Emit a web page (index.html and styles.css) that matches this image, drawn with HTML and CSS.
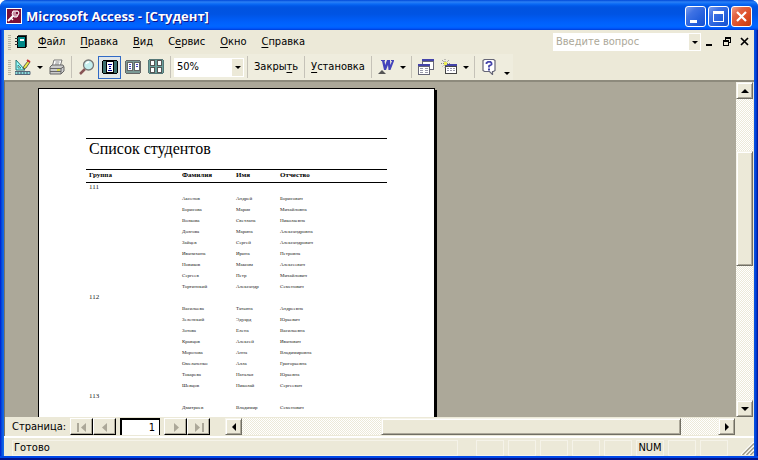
FILE: index.html
```html
<!DOCTYPE html>
<html lang="ru">
<head>
<meta charset="utf-8">
<title>Microsoft Access - [Студент]</title>
<link rel="stylesheet" href="styles.css">
</head>
<body>
<div class="window">
  <header class="titlebar">
    <svg class="app-icon" width="16" height="16" viewBox="0 0 16 16" shape-rendering="crispEdges">
      <path fill="#fff" d="M0 0h16v16H0z"/><path fill="#7b1038" d="M1 1h14v14H1z"/>
      <g shape-rendering="auto" fill="none" stroke="#fff" stroke-width="2"><path d="M8 7 2 13"/><path d="M7 3h5l1 2-2 4H8L6 6z" fill="#c890a4" stroke-width="1"/><path d="M5 10l2 2" stroke-width="1.4"/></g>
      <path fill="#7b1038" d="M10 4h2v2h-2z"/>
    </svg>
    <h1 class="title">Microsoft Access - [Студент]</h1>
    <div class="caption-buttons">
      <button class="caption" aria-label="Свернуть"><svg width="19" height="19"><path fill="#fff" d="M4 13h7v3H4z"/></svg></button>
      <button class="caption" aria-label="Развернуть"><svg width="19" height="19" shape-rendering="crispEdges"><path fill="#fff" fill-rule="evenodd" d="M4 4h11v11H4zM5 7v7h9V7z"/></svg></button>
      <button class="caption caption-close" aria-label="Закрыть окно"><svg width="19" height="19"><path d="M5 5l9 9M14 5l-9 9" stroke="#fff" stroke-width="2.2"/></svg></button>
    </div>
  </header>

  <nav class="menubar">
    <span class="grip"></span>
    <svg class="doc-icon" width="12" height="14" viewBox="0 0 12 14" shape-rendering="crispEdges">
      <path d="M2 1h9v12H2z"/><path fill="#088" d="M3 2h7v10H3z"/><path fill="#fff" d="M5 4h4v2H5z"/><path fill="#333" d="M0 3h3v1H0zM0 6h3v1H0zM0 9h3v1H0zM3 0h9v1H3zM11 1h1v11h-1z"/>
    </svg>
    <div class="menu-items">
      <button class="menu"><u>Ф</u>айл</button>
      <button class="menu"><u>П</u>равка</button>
      <button class="menu"><u>В</u>ид</button>
      <button class="menu">С<u>е</u>рвис</button>
      <button class="menu"><u>О</u>кно</button>
      <button class="menu"><u>С</u>правка</button>
    </div>
    <div class="combo ask">
      <input type="text" aria-label="Вопрос" placeholder="Введите вопрос">
      <button class="drop" aria-label="Список вопросов"><i class="arrow"></i></button>
    </div>
    <div class="mdi">
      <button aria-label="Свернуть документ"><svg width="10" height="10" shape-rendering="crispEdges"><path d="M2 7h6v2H2z"/></svg></button>
      <button aria-label="Восстановить документ"><svg width="10" height="10" shape-rendering="crispEdges"><path fill-rule="evenodd" d="M3 0h6v6H7v3H1V3h2zM4 2v1h3v2h1V2zM2 5v3h4V5z"/></svg></button>
      <button aria-label="Закрыть документ"><svg width="10" height="10"><path d="M1 1l7 7M8 1l-7 7" stroke="#000" stroke-width="1.7"/></svg></button>
    </div>
  </nav>

  <div class="toolbar">
    <span class="grip"></span>
    <button class="tool split" aria-label="Вид">
      <svg width="16" height="16" viewBox="0 0 16 16"><path d="M1 1v10h9z" fill="#9ff" stroke="#277" /><path d="M3 6v3h3z" fill="#efedde" stroke="#277" stroke-width=".8"/><path d="M0 12.500h15v3H0z" fill="#8dd" stroke="#567"/><path d="M3 13v2M6 13v2M9 13v2M12 13v2" stroke="#456"/><path d="M8 10l1-3 4-5 2 1-4 6z" fill="#ee4" stroke="#554" stroke-width=".9"/><path d="M12 1l3 2" stroke="#c33" stroke-width="2"/></svg>
      <i class="arrow"></i>
    </button>
    <button class="tool" aria-label="Печать">
      <svg width="16" height="16" viewBox="0 0 16 16"><path d="M5 1h8l-2 7H3z" fill="#fff" stroke="#777"/><path d="M6.500 3h4M6 5h4" stroke="#888"/><path d="M1 8l2-2h11l1 2v4l-3 3H1z" fill="#ccc" stroke="#666"/><path d="M1 9.500h11l3-2M1 12.500h11M12 9v6" fill="none" stroke="#666"/><path d="M8 11h3" stroke="#dd2" stroke-width="1.500"/></svg>
    </button>
    <span class="sep"></span>
    <button class="tool" aria-label="Масштаб">
      <svg width="16" height="16" viewBox="0 0 16 16"><path d="M6 10l-5 5" stroke="#855" stroke-width="2.500"/><circle cx="9.500" cy="6" r="5" fill="#c5eeee" stroke="#777" stroke-width="1.300"/><path d="M7 5q1-2 3-2" fill="none" stroke="#fff" stroke-width="1.300"/></svg>
    </button>
    <button class="tool pressed" aria-label="Одна страница" aria-pressed="true">
      <svg width="16" height="16" viewBox="0 0 16 16" shape-rendering="crispEdges"><path d="M1 1h14v1h1v12h-1v1H1v-1H0V2h1z"/><path fill="#3c6f6f" d="M1 2h14v12H1z"/><path d="M4 2h8v12H4z"/><path fill="#fff" d="M5 3h6v10H5z"/><path fill="#009" d="M6 5h4v1H6zM7 7h2v1H7zM7 9h2v1H7zM6 11h4v1H6z"/></svg>
    </button>
    <button class="tool" aria-label="Две страницы">
      <svg width="16" height="16" viewBox="0 0 16 16" shape-rendering="crispEdges"><path fill="#666" d="M1 1h14v1h1v12h-1v1H1v-1H0V2h1z"/><path fill="#7a9995" d="M1 2h14v12H1z"/><path fill="#666" d="M2 3h6v9H2zM9 3h6v9H9z"/><path fill="#fff" d="M3 4h4v7H3zM10 4h4v7h-4z"/><path fill="#44b" d="M4 5h2v1H4zM4 7h2v1H4zM4 9h2v1H4zM11 5h2v1h-2zM11 7h2v1h-2z"/></svg>
    </button>
    <button class="tool" aria-label="Несколько страниц">
      <svg width="16" height="16" viewBox="0 0 16 16" shape-rendering="crispEdges"><path fill="#577" d="M1 0h14v1h1v13h-1v1H1v-1H0V1h1z"/><path fill="#6a9f9b" d="M1 1h14v13H1z"/><path fill="#555" d="M2 1h5v6H2zM9 1h5v6H9zM2 8h5v6H2zM9 8h5v6H9z"/><path fill="#fff" d="M3 2h3v4H3zM10 2h3v4h-3zM3 9h3v4H3zM10 9h3v4h-3z"/></svg>
    </button>
    <span class="sep"></span>
    <div class="combo zoom">
      <input type="text" aria-label="Масштаб страницы" value="50%">
      <button class="drop" aria-label="Список масштабов"><i class="arrow"></i></button>
    </div>
    <span class="sep"></span>
    <button class="tool text">Закры<u>т</u>ь</button>
    <span class="sep"></span>
    <button class="tool text"><u>У</u>становка</button>
    <span class="sep"></span>
    <button class="tool split" aria-label="Связь с Office">
      <svg width="16" height="16" viewBox="0 0 16 16"><path fill="#44b" d="M3 1h4v1H6.500l.7 4L9 1h3l.3 5L14 2h-1V1h3v1l-3.500 9h-2L10 6l-2 5H6L4 2H3z"/><path fill="#555" d="M0 15l4-4 4 4z"/></svg>
      <i class="arrow"></i>
    </button>
    <span class="sep"></span>
    <button class="tool" aria-label="Окно базы данных">
      <svg width="16" height="16" viewBox="0 0 16 16" shape-rendering="crispEdges"><path fill="#667" d="M4 0h12v11H4z"/><path fill="#fff" d="M5 3h10v7H5z"/><path fill="#44a" d="M4 0h12v2H4z"/><path fill="#667" d="M0 5h12v11H0z"/><path fill="#fff" d="M1 8h10v7H1z"/><path fill="#44a" d="M0 5h12v2H0z"/><path fill="#99a" d="M2 9h3v1H2zM7 9h3v1H7zM2 11h3v1H2zM7 11h3v1H7zM2 13h3v1H2zM7 13h3v1H7z"/></svg>
    </button>
    <button class="tool split" aria-label="Новый объект">
      <svg width="16" height="16" viewBox="0 0 16 16" shape-rendering="crispEdges"><path fill="#444" d="M4 5h12v10H4z"/><path fill="#fff" d="M5 8h10v6H5z"/><path fill="#44a" d="M5 5h11v2H5z"/><path fill="#99a" d="M6 9h2v1H6zM9 9h2v1H9zM12 9h2v1h-2zM6 11h2v1H6zM9 11h2v1H9zM12 11h2v1h-2z"/><path shape-rendering="auto" stroke="#888" stroke-dasharray="1 1" d="M4 0v9M0 4.500h9M1 1l7 7M8 1L1 8"/><path fill="#ee5" d="M3 3h3v3H3z"/></svg>
      <i class="arrow"></i>
    </button>
    <span class="sep"></span>
    <button class="tool help" aria-label="Справка: Microsoft Access">
      <svg width="16" height="16" viewBox="0 0 16 16"><path fill="#fff" stroke="#667" stroke-width="1.200" d="M2.500.5h9l1.500 1v10l-1.500 1h-1v3l-3-3h-5l-1.500-1v-10z"/><path fill="none" stroke="#44a" stroke-width="1.800" d="M4.500 5V4L6 2.800h2.500L9.500 4v1.500L7 7v1.500"/><path fill="#44a" d="M6 9.500h2v2H6z"/></svg>
      <i class="arrow low"></i>
    </button>
  </div>

  <main class="workspace">
    <section class="preview">
      <article class="sheet">
        <h2 class="report-title">Список студентов</h2>
        <table class="report">
          <thead><tr><th class="c-group">Группа</th><th class="c-last">Фамилия</th><th class="c-first">Имя</th><th>Отчество</th></tr></thead>
          <tbody>
            <tr class="group"><td colspan="4">111</td></tr>
            <tr><td></td><td>Аксенов</td><td>Андрей</td><td>Борисович</td></tr>
            <tr><td></td><td>Борисова</td><td>Мария</td><td>Михайловна</td></tr>
            <tr><td></td><td>Волкова</td><td>Светлана</td><td>Николаевна</td></tr>
            <tr><td></td><td>Долгова</td><td>Марина</td><td>Александровна</td></tr>
            <tr><td></td><td>Зайцев</td><td>Сергей</td><td>Александрович</td></tr>
            <tr><td></td><td>Иванихина</td><td>Ирина</td><td>Петровна</td></tr>
            <tr><td></td><td>Новиков</td><td>Максим</td><td>Алексеевич</td></tr>
            <tr><td></td><td>Сергеев</td><td>Петр</td><td>Михайлович</td></tr>
            <tr><td></td><td>Тортинский</td><td>Александр</td><td>Семенович</td></tr>
          </tbody>
          <tbody>
            <tr class="group"><td colspan="4">112</td></tr>
            <tr><td></td><td>Васильева</td><td>Татьяна</td><td>Андреевна</td></tr>
            <tr><td></td><td>Зеленский</td><td>Эдуард</td><td>Юрьевич</td></tr>
            <tr><td></td><td>Зотова</td><td>Елена</td><td>Васильевна</td></tr>
            <tr><td></td><td>Кравцов</td><td>Алексей</td><td>Иванович</td></tr>
            <tr><td></td><td>Морозова</td><td>Анна</td><td>Владимировна</td></tr>
            <tr><td></td><td>Омельченко</td><td>Алла</td><td>Григорьевна</td></tr>
            <tr><td></td><td>Токарева</td><td>Наталья</td><td>Юрьевна</td></tr>
            <tr><td></td><td>Шевцов</td><td>Николай</td><td>Сергеевич</td></tr>
          </tbody>
          <tbody>
            <tr class="group"><td colspan="4">113</td></tr>
            <tr><td></td><td>Дмитриев</td><td>Владимир</td><td>Семенович</td></tr>
          </tbody>
        </table>
      </article>
    </section>
    <div class="vscroll">
      <button class="sbtn" aria-label="Вверх"><i class="tri up"></i></button>
      <div class="track"><span class="space-before"></span><span class="thumb"></span><span class="space-after"></span></div>
      <button class="sbtn" aria-label="Вниз"><i class="tri down"></i></button>
    </div>
  </main>

  <div class="pager">
    <label for="page">Страница:</label>
    <div class="nav-pair">
      <button class="nav" aria-label="Первая страница"><svg width="12" height="10"><path d="M1 1h2v9H1zM10 1v9L5 5.500z"/></svg></button>
      <button class="nav" aria-label="Предыдущая страница"><svg width="12" height="10"><path d="M8 1v9L3 5.500z"/></svg></button>
    </div>
    <input id="page" type="text" value="1">
    <div class="nav-pair">
      <button class="nav" aria-label="Следующая страница"><svg width="12" height="10"><path d="M4 1v9l5-4.500z"/></svg></button>
      <button class="nav" aria-label="Последняя страница"><svg width="12" height="10"><path d="M9 1h2v9H9zM2 1v9l5-4.500z"/></svg></button>
    </div>
    <div class="hscroll">
      <button class="sbtn" aria-label="Влево"><i class="tri left"></i></button>
      <div class="track"><span class="space-before"></span><span class="thumb"></span><span class="space-after"></span></div>
      <button class="sbtn" aria-label="Вправо"><i class="tri right"></i></button>
    </div>
  </div>

  <footer class="status">
    <span class="cell message">Готово</span>
    <span class="cell"></span>
    <span class="cell"></span>
    <span class="cell"></span>
    <span class="cell"></span>
    <span class="cell"></span>
    <span class="cell">NUM</span>
    <span class="cell"></span>
    <span class="cell"></span>
    <svg class="resize" width="13" height="13" shape-rendering="auto"><path stroke="#fff" stroke-width="1.500" d="M0 13L13 0M4 13l9-9M8 13l5-5"/><path stroke="#9d9a8a" stroke-width="1.500" d="M1.500 13L13 1.500M5.500 13L13 5.500M9.500 13L13 9.500"/></svg>
  </footer>
</div>
</body>
</html>
```
FILE: styles.css
```css
* { box-sizing: border-box; }
html, body { height: 100%; }
body {
  margin: 0;
  background: #fff;
  color: #000;
  font: 11px/14px "DejaVu Sans Condensed", "Noto Sans", sans-serif;
  overflow: hidden;
}
button, input { font: inherit; color: inherit; padding: 0; border: 0; border-radius: 0; background: none; }
input { min-width: 0; outline: 0; }
svg { display: block; flex: none; }

.window {
  display: flex;
  flex-direction: column;
  height: 100vh;
  padding: 0 4px 4px;
  border-radius: 7px 7px 0 0;
  background: linear-gradient(90deg, #0019cf, #0855dd 2px, #166aee 4px, #0855dd calc(100% - 4px), #0041dc calc(100% - 2px), #00138c);
  box-shadow: inset 0 -2px #00138c, inset 0 -4px #0048e8;
}

.titlebar {
  display: flex;
  align-items: center;
  height: 30px;
  flex: none;
  margin: 0 -4px;
  padding: 2px 6px 0;
  border-radius: 7px 7px 0 0;
  background: linear-gradient(#0048d8, #2b80f5 2px, #0a6af5 4px, #0058e8 6px, #0053e0 8px, #0054e3 14px, #0060fc 22px, #0066ff 26px, #005bff 28px, #003dd7);
}
.title {
  flex: 1;
  margin: 0 0 0 4px;
  color: #fff;
  font: bold 13px/18px "Open Sans", "Noto Sans", sans-serif;
  text-shadow: 1px 1px #0f1089;
}
.caption-buttons { display: flex; gap: 2px; }
.caption {
  width: 21px;
  height: 21px;
  border: 1px solid #fff;
  border-radius: 3px;
  background: linear-gradient(135deg, #7a9cec, #3f72e4 30%, #2560dc 65%, #1650d0);
}
.caption-close { background: linear-gradient(135deg, #f0a08a, #e26444 30%, #dc4c22 65%, #c23c10); }

.menubar, .toolbar, .pager, .status { background: #ece9d8; flex: none; }
.menubar { display: flex; align-items: center; height: 24px; padding: 0 4px; }
.grip { width: 3px; height: 15px; flex: none; background: repeating-linear-gradient(#b8b5a4 0 1px, #ece9d8 1px 2px); }
.doc-icon { margin: 0 11px 0 4px; }
.menu-items { display: flex; gap: 15px; flex: 1; }
u { text-decoration: underline; text-underline-offset: 2px; }

.combo { display: flex; height: 18px; padding: 1px; background: #fff; }
.combo input { flex: 1; padding-left: 2px; }
.ask { width: 148px; }
.ask input::placeholder { color: #aca899; opacity: 1; }
.drop { width: 11px; display: grid; place-items: center; background: #ece9d8; }
.arrow { width: 0; height: 0; border: solid transparent; border-width: 3px 3px 0; border-top-color: #000; }
.mdi { display: flex; gap: 8px; margin-left: 3px; }

.toolbar { display: flex; align-items: center; height: 26px; padding: 0 0 0 4px; background: linear-gradient(90deg, #efedde 509px, #ece9d8 509px); }
.toolbar .grip { margin-right: 1px; }
.tool { display: flex; align-items: center; justify-content: center; width: 23px; height: 23px; flex: none; }
.split { width: 33px; gap: 6px; padding-left: 1px; }
.pressed { border: 1px solid #316ac5; background: #e1e6e8; }
.text { width: auto; padding: 0 3px; }
.help { width: 37px; gap: 6px; }
.low { align-self: flex-end; margin-bottom: 4px; }
.sep { width: 1px; height: 22px; margin: 0 3px; flex: none; background: #c5c2b8; }
.zoom { width: 70px; height: 19px; }

.workspace { display: flex; flex: 1; min-height: 0; padding-right: 1px; border: solid #77756a; border-width: 2px 0 0 1px; border-top-color: #8d8a7c; background: #ece9d8; }
.preview { flex: 1; min-width: 0; overflow: hidden; padding: 6px 0 0 33px; background: #aca899; }
.sheet {
  width: 397px;
  height: 560px;
  padding: 49px 47px 0;
  background: #fff;
  border: 1px solid #000;
  box-shadow: 2px 2px #000;
  font-family: "Liberation Serif", serif;
}
.report-title { margin: 0; height: 31px; padding: 0 3px; border-top: 1px solid #000; font-size: 16px; font-weight: 400; line-height: 19px; }
.report { width: 100%; border-collapse: collapse; table-layout: fixed; font-size: 5px; line-height: 9px; color: #222; }
.report th, .report td { height: 11px; padding: 0 0 2px; text-align: left; vertical-align: top; white-space: nowrap; }
.report th { height: 13px; padding: 0; border: solid #000; border-width: 1px 0; color: #000; font-size: 7px; line-height: 11px; }
.report th:first-child { padding-left: 3px; }
.c-group { width: 96px; }
.c-last { width: 54px; }
.c-first { width: 44px; }
.report .group td { padding-left: 3px; font-size: 7px; }

.track { display: flex; flex: 1; background: repeating-conic-gradient(#fff 0 25%, #ece9d8 0 50%) 0 0 / 2px 2px; }
.sbtn, .thumb, .nav { background: #ece9d8; border: 1px solid; border-color: #f6f4ea #716f64 #716f64 #f6f4ea; box-shadow: inset 1px 1px #fff, inset -1px -1px #aca899; }
.sbtn { display: grid; place-items: center; width: 17px; height: 17px; flex: none; }
.tri { width: 0; height: 0; border: 4px solid transparent; }
.up { border-top: 0; border-bottom-color: #000; }
.down { border-bottom: 0; border-top-color: #000; }
.left { border-left: 0; border-right-color: #000; }
.right { border-right: 0; border-left-color: #000; }
.vscroll { display: flex; flex-direction: column; width: 17px; }
.vscroll .track { flex-direction: column; }
.vscroll .space-before { flex: 53; }
.vscroll .thumb { flex: 114; }
.vscroll .space-after { flex: 135; }

.pager { display: flex; align-items: center; height: 19px; padding: 0 19px 0 7px; border-left: 1px solid #77756a; }
.pager label { width: 58px; }
.nav-pair { display: flex; }
.nav { display: grid; place-items: center; width: 23px; height: 17px; border-color: #fff #000 #000 #fff; box-shadow: inset -1px -1px #aca899; fill: #aca899; }
.pager input { width: 40px; height: 17px; margin: 0 4px; padding-right: 4px; text-align: right; background: #fff; border: solid #000; border-width: 2px 1px 0 2px; }
.hscroll { display: flex; flex: 1; margin-left: 15px; }
.hscroll .space-before { flex: 140; }
.hscroll .thumb { flex: 299; }
.hscroll .space-after { flex: 37; }

.status { display: flex; align-items: center; gap: 4px; height: 20px; padding: 2px 0 0 8px; border-top: 2px solid #fff; }
.cell { width: 28px; height: 16px; border: 1px solid #f5f3e9; text-align: center; line-height: 14px; }
.message { flex: 1; margin-right: 14px; padding-left: 1px; text-align: left; }
.resize { margin-left: 9px; }
```
